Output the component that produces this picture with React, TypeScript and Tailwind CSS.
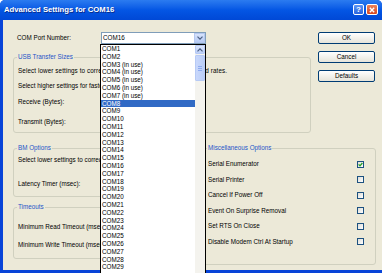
import React from "react";

const items: string[] = [
  "COM1","COM2","COM3 (in use)","COM4 (in use)","COM5 (in use)","COM6 (in use)","COM7 (in use)",
  "COM8","COM9","COM10","COM11","COM12","COM13","COM14","COM15","COM16","COM17","COM18","COM19",
  "COM20","COM21","COM22","COM23","COM24","COM25","COM26","COM27","COM28","COM29",
];

function Chevron({ up = false }: { up?: boolean }) {
  return (
    <svg width="6" height="4" viewBox="0 0 6 4" className="block">
      <path
        d={up ? "M0.5 3.3 L3 0.8 L5.5 3.3" : "M0.5 0.7 L3 3.2 L5.5 0.7"}
        fill="none"
        stroke="#4D6185"
        strokeWidth="1.2"
      />
    </svg>
  );
}

function XPButton({ label }: { label: string }) {
  return (
    <div className="h-[12px] w-[57px] rounded-[2px] border border-[#003C74] bg-gradient-to-b from-white to-[#E6E4DA] flex items-center justify-center text-[6.3px] leading-none text-black">
      {label}
    </div>
  );
}

function GroupLabel({ text }: { text: string }) {
  return (
    <div className="-mt-[5px] ml-[3px] h-[8px] w-fit px-[1px] bg-[#ECE9D8] text-[#1E55C8] leading-[8px]">
      {text}
    </div>
  );
}

function Checkbox({ checked = false }: { checked?: boolean }) {
  return (
    <div className="h-[7px] w-[7px] border border-[#1C5180] bg-gradient-to-br from-[#DCDCD7] to-white flex items-center justify-center">
      {checked && (
        <svg width="5" height="5" viewBox="0 0 5 5" className="block">
          <path d="M0.6 2.4 L2 3.8 L4.4 1" fill="none" stroke="#21A121" strokeWidth="1.3" />
        </svg>
      )}
    </div>
  );
}

export default function App() {
  const misc: [string, boolean][] = [
    ["Serial Enumerator", true],
    ["Serial Printer", false],
    ["Cancel If Power Off", false],
    ["Event On Surprise Removal", false],
    ["Set RTS On Close", false],
    ["Disable Modem Ctrl At Startup", false],
  ];
  return (
    <div className="relative w-[382px] h-[273px] overflow-hidden bg-[#0844D8] rounded-t-[5px] flex flex-col font-['Liberation_Sans',Arial,sans-serif] text-[6.3px] text-black">
      {/* Title bar */}
      <div className="h-[20px] shrink-0 flex items-center justify-between pl-[4px] pr-[4px] bg-gradient-to-b from-[#2B7BF0] via-[#0456E4] to-[#0048D6]">
        <div className="text-white font-bold text-[7.7px] leading-none [text-shadow:1px_1px_0_#0A2D8C]">
          Advanced Settings for COM16
        </div>
        <div className="flex items-center gap-[2px] -mt-[1px]">
          <div className="h-[11px] w-[11px] rounded-[2px] border border-white bg-gradient-to-b from-[#5C96F5] to-[#2A64DF] flex items-center justify-center text-white font-bold text-[8px] leading-none">
            ?
          </div>
          <div className="h-[11px] w-[12px] rounded-[2px] border border-white bg-gradient-to-b from-[#EA8159] to-[#D8461E] flex items-center justify-center">
            <svg width="6" height="6" viewBox="0 0 6 6" className="block">
              <path d="M0.8 0.8 L5.2 5.2 M5.2 0.8 L0.8 5.2" stroke="white" strokeWidth="1.4" />
            </svg>
          </div>
        </div>
      </div>

      {/* Body */}
      <div className="flex-1 ml-[3px] mb-[3px] bg-[#ECE9D8] pl-[10px] pt-[12px] flex flex-col">
        {/* Top section */}
        <div className="flex gap-[7px]">
          <div className="w-[298px] flex flex-col">
            <div className="h-[12px] flex items-center">
              <div className="w-[88px] pl-[4px] leading-none">COM Port Number:</div>
              <div className="w-[105px] h-[12px] border border-[#7F9DB9] bg-white flex items-center justify-between">
                <span className="pl-[1px] leading-none">COM16</span>
                <div className="h-full w-[11px] border border-[#B5C8F0] bg-gradient-to-b from-[#D7E3FB] to-[#B7CBF5] flex items-center justify-center">
                  <Chevron />
                </div>
              </div>
            </div>
            <div className="mt-[13px] border border-[#D0D0BF] rounded-[3px] flex flex-col pb-[6px]">
              <GroupLabel text="USB Transfer Sizes" />
              <div className="mt-[6px] h-[8px] leading-[8px] pl-[4px] tracking-[0.1px] whitespace-nowrap">
                Select lower settings to correct performance problems at low baud rates.
              </div>
              <div className="mt-[7px] h-[8px] leading-[8px] pl-[4px] whitespace-nowrap">
                Select higher settings for faster performance.
              </div>
              <div className="mt-[8px] h-[8px] leading-[8px] pl-[4px]">Receive (Bytes):</div>
              <div className="mt-[12px] h-[8px] leading-[8px] pl-[4px]">Transmit (Bytes):</div>
            </div>
          </div>
          <div className="w-[57px] flex flex-col gap-[7px]">
            <XPButton label="OK" />
            <XPButton label="Cancel" />
            <XPButton label="Defaults" />
          </div>
        </div>

        {/* Bottom section */}
        <div className="mt-[15px] flex gap-[7px]">
          <div className="w-[183px] flex flex-col">
            <div className="border border-[#D0D0BF] rounded-[3px] flex flex-col pb-[8px]">
              <GroupLabel text="BM Options" />
              <div className="mt-[4px] h-[8px] leading-[8px] pl-[4px] whitespace-nowrap">
                Select lower settings to correct response problems.
              </div>
              <div className="mt-[16px] h-[8px] leading-[8px] pl-[4px]">Latency Timer (msec):</div>
            </div>
            <div className="mt-[10px] border border-[#D0D0BF] rounded-[3px] flex flex-col pb-[9px]">
              <GroupLabel text="Timeouts" />
              <div className="mt-[12px] h-[8px] leading-[8px] pl-[4px] whitespace-nowrap">
                Minimum Read Timeout (msec):
              </div>
              <div className="mt-[10px] h-[8px] leading-[8px] pl-[4px] whitespace-nowrap">
                Minimum Write Timeout (msec):
              </div>
            </div>
          </div>
          <div className="w-[173px] h-[117px] border border-[#D0D0BF] rounded-[3px] flex flex-col">
            <GroupLabel text="Miscellaneous Options" />
            <div className="mt-[8px] flex flex-col gap-[7.6px] pl-[4px] pr-[11px]">
              {misc.map(([t, c]) => (
                <div key={t} className="h-[8px] flex items-center justify-between">
                  <span className="leading-[8px]">{t}</span>
                  <Checkbox checked={c} />
                </div>
              ))}
            </div>
          </div>
        </div>
      </div>

      {/* Dropdown list overlay */}
      <div className="absolute left-[100px] top-[44px] w-[106px] h-[240px] border border-[#000] bg-white flex">
        <div className="flex-1 flex flex-col">
          {items.map((it) => (
            <div
              key={it}
              className={
                "h-[7.8px] shrink-0 leading-[7.8px] pl-[1px] whitespace-nowrap " +
                (it === "COM8" ? "bg-[#316AC5] text-white" : "text-black")
              }
            >
              {it}
            </div>
          ))}
        </div>
        <div className="w-[10px] bg-[#F4F3EE] flex flex-col">
          <div className="h-[9px] border border-[#B7CAF5] rounded-[1px] bg-gradient-to-b from-[#DCE6FC] to-[#BCCFF7] flex items-center justify-center">
            <Chevron up />
          </div>
          <div className="mt-[1px] h-[26px] border border-[#B7CAF5] rounded-[1px] bg-gradient-to-r from-[#C9D8FC] to-[#BACDF6] flex flex-col items-center justify-center gap-[1px]">
            <div className="h-px w-[4px] bg-[#8EABEF]" />
            <div className="h-px w-[4px] bg-[#8EABEF]" />
            <div className="h-px w-[4px] bg-[#8EABEF]" />
          </div>
        </div>
      </div>
    </div>
  );
}
